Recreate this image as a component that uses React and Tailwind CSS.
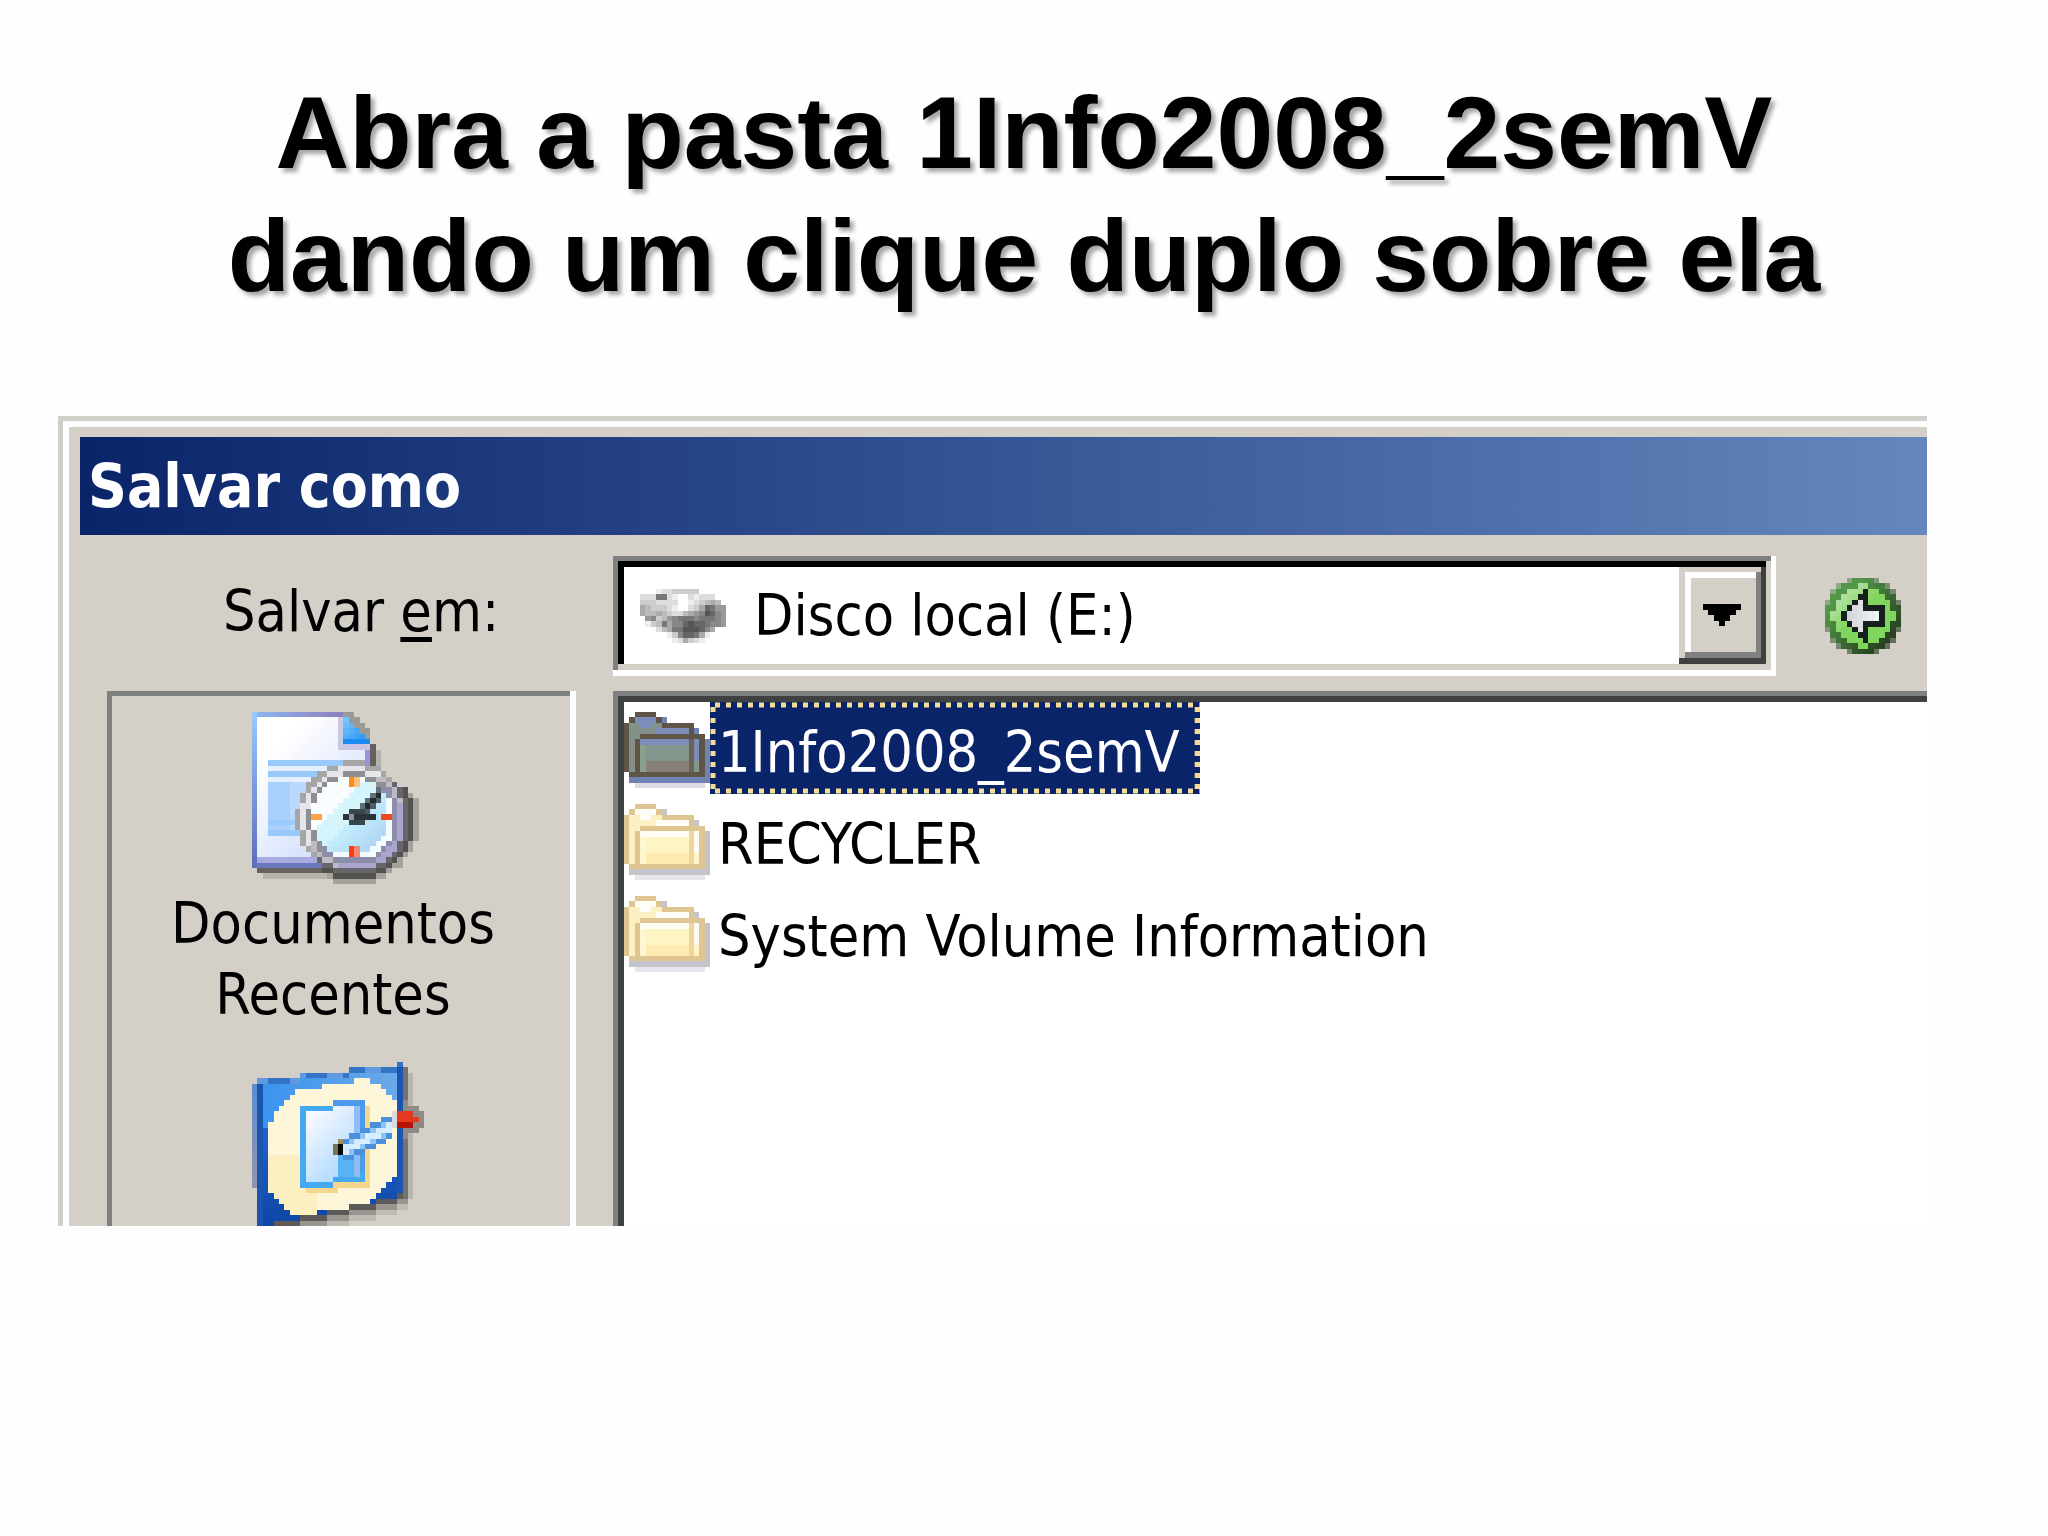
import React from "react";

const UI = "font-['DejaVu_Sans_Condensed','Noto_Sans',sans-serif]";

function PixelArt({ cols, rows, cell, className }) {
  const rects = [];
  for (let y = 0; y < rows; y++) {
    for (let x = 0; x < cols; x++) {
      const fill = cell(x, y);
      if (fill) rects.push(<rect key={y * cols + x} x={x} y={y} width="1.02" height="1.02" fill={fill} />);
    }
  }
  return (
    <svg viewBox={`0 0 ${cols} ${rows}`} preserveAspectRatio="none" shapeRendering="crispEdges" aria-hidden="true" className={className}>
      {rects}
    </svg>
  );
}

const mix = (a, b, t) => {
  const k = Math.max(0, Math.min(1, t));
  return `rgb(${a.map((v, i) => Math.round(v + (b[i] - v) * k)).join(",")})`;
};

const FOLDER = [
  "..eeee..........",
  ".ehhhhes........",
  "eyyhhyyeeeeee...",
  "eyyyyyhhhhhhes..",
  "eyyeeeeeeeeeeee.",
  "eyehhhhhhhhhthes",
  "eyelffffffffthes",
  "eyelffffffffthes",
  "eyelffffffffthes",
  "eyelggggggggtfes",
  "eyelggggggggtfes",
  ".eeeeeeeeeeeeees",
  ".sssssssssssssss",
  "..rrrrrrrrrrrrr.",
];
const FOLDER_NORMAL = { e: "#dfc591", h: "#fffef6", y: "#fdf0c2", l: "#fff6d2", f: "#fef4c4", g: "#fdebb2", t: "#f3d39c", s: "#c4c5ca", r: "#e6e7ec" };
const FOLDER_SELECTED = { e: "#5f5546", h: "#7c8dba", y: "#84908a", l: "#8ba08c", f: "#82968c", g: "#887f78", t: "#6c6256", s: "#7183b4", r: "#dadbe0" };

function Folder({ selected }) {
  const palette = selected ? FOLDER_SELECTED : FOLDER_NORMAL;
  return <PixelArt cols={16} rows={14} cell={(x, y) => palette[FOLDER[y][x]]} className="mt-1 h-[76px] w-[86px] shrink-0" />;
}

const DRIVE = [
  "...eddccccc.....",
  "ddd77deffdeddd..",
  "cccddddffedcbab.",
  "abcccdeffdca6799",
  "abbabcddba985689",
  ".98cb98777877789",
  ".ecb7a8865667889",
  "...dba7755568a..",
  ".....ec8667ae...",
  "......edacde....",
];

function Drive() {
  const cell = (x, y) => {
    const c = DRIVE[y][x];
    return c === "." ? null : `#${c}${c}${c}`;
  };
  return <PixelArt cols={16} rows={10} cell={cell} className="h-[54px] w-[86px] shrink-0" />;
}

const ARROW = [
  "..............",
  "..............",
  ".......k......",
  "......kk......",
  ".....kwk......",
  "....kwwkkkk...",
  "...kwwwwwwk...",
  "...kwwwwwwk...",
  "....kwwkkkk...",
  ".....kwk......",
  "......kk......",
  ".......k......",
  "..............",
  "..............",
];

function BackArrow() {
  const cell = (x, y) => {
    const c = ARROW[y][x];
    if (c === "k") return "#15201a";
    if (c === "w") return mix([205, 208, 212], [240, 242, 244], (x - 3) / 6);
    const d = Math.hypot(x - 6.5, y - 6.5);
    if (d > 7.3) return null;
    if (d > 6.7) return mix([150, 178, 142], [96, 100, 88], (x + y) / 26);
    if (d > 5.7) return mix([82, 150, 72], [38, 66, 30], (x + y - 6) / 16);
    return mix([190, 226, 180], [128, 214, 92], (x + y - 4) / 8);
  };
  return <PixelArt cols={14} rows={14} cell={cell} className="h-[76px] w-[76px]" />;
}

function recentCell(x, y) {
  const dx = x - 18.3;
  const dy = y - 19.3;
  const d = Math.hypot(dx, dy) * 1.04;
  if (d < 8) {
    if (x >= 18 && x <= 19 && y >= 12 && y <= 13) return x === 18 ? "#ff8a1c" : "#ffc07a";
    if (x >= 18 && x <= 19 && y >= 25 && y <= 26) return x === 18 ? "#ff3c0c" : "#f08a70";
    if (y === 19 && (x === 11 || x === 12)) return "#ffa04a";
    if (y === 19 && (x === 24 || x === 25)) return "#ee4a1c";
    if (y === 19 && x >= 17 && x <= 22) return x === 18 ? "#8b95a0" : "#2c3338";
    if ((y === 18 || y === 20) && x >= 18 && x <= 20) return "#3a464c";
    if (x + y === 38 && x >= 19 && x <= 23) return "#232b30";
    if (x + y === 37 && x >= 20 && x <= 23) return "#5f7078";
    if (x + y === 39 && x >= 20 && x <= 23) return "#4d5b64";
    if (d > 6.6 && dx + dy > 3) return "#f4fbff";
    return dx + dy < -5 ? "#fafdff" : dx + dy < 0 ? "#d6f4fb" : mix([196, 238, 252], [178, 216, 246], (dx + dy) / 8);
  }
  if (d < 8.9) return dx + dy < 0 ? "#8d8f92" : "#8c8da8";
  if (d < 10) return dx + dy < -3 ? "#e6e6ea" : dx + dy < 6 ? "#bdbcc2" : "#a9a5cc";
  if (d < 10.9) return dx + dy < 0 ? "#a6a6a6" : "#66666c";
  if (d < 11.9 && dx + dy > 4) return "#54524e";
  if (d < 12.8 && dx + dy > 6) return "#a5a29b";
  if (x <= 21 && y <= 28) {
    if (x - y > 16) {
      if (x - y === 17 || x - y === 18) return y < 7 ? "#9a9a96" : null;
      return null;
    }
    if (x === 0) return mix([150, 200, 255], [94, 108, 190], y / 28);
    if (y === 0) return mix([140, 180, 240], [140, 130, 190], x / 16);
    if (y === 28) return "#6b78bd";
    if (y === 27) return "#a9abdf";
    if (x >= 17 && y >= 1 && y <= 5) return y >= 5 ? "#1b8cf0" : mix([150, 215, 255], [50, 155, 245], (x - 15 + y) / 9);
    if (x === 16 && y <= 6) return "#c6cae4";
    if (x >= 16 && y === 6) return "#c9c4e6";
    if (x === 21) return "#9d93dc";
    if (x >= 3 && y >= 9 && y <= 22) {
      if (y === 9 || y === 11 || y === 22) return "#99c8fb";
      if (y === 10 || y === 12) return "#e4f0ff";
      if (y === 20) return "#9ccafb";
      return x > 6 ? "#b9dafc" : "#a9d0fb";
    }
    return mix([255, 255, 255], [214, 226, 252], (x + y - 10) / 26);
  }
  if (x === 22 && y >= 6 && y <= 10) return "#64625e";
  if (x === 23 && y >= 7 && y <= 10) return "#b5b2ab";
  if (y === 29 && x >= 1 && x <= 17) return "#66635f";
  if (y === 30 && x >= 2 && x <= 17) return "#b7b4ac";
  return null;
}

function desktopCell(x, y) {
  const top = 3 - x * 0.115;
  const bottom = 29.8 - x * 0.215;
  const tip = Math.hypot(x - 28.2, y - 10);
  if (tip < 1.9) return y > 10 ? "#b41408" : "#e23a1e";
  if (x === 26 && y >= 9 && y <= 11) return "#d8dade";
  const pen = 15.4 - (x - 17) * 0.5;
  if (x >= 17 && x <= 25 && Math.abs(y - pen) < 2.2) {
    return Math.abs(y - pen) > 1.2 ? "#4a90dc" : Math.abs(y - pen) < 0.6 ? "#d6ecff" : "#8fc4f6";
  }
  if (x >= 15 && x <= 17 && (y === 15 || y === 16)) return x === 16 ? "#0a0a08" : "#77735a";
  if (x === 16 && y === 14) return "#9c8f5a";
  if (tip < 3.1 && x > 27) return "#8f8a86";
  if (x <= 27 && x >= 1 && y >= top && y <= bottom) {
    const pt = 7.9 - (x - 9) * 0.16;
    const pb = 22.9 - (x - 9) * 0.16;
    if (x >= 9 && x <= 20 && y >= pt && y <= pb) {
      if (x === 9 || y < pt + 1 || y > pb - 1 || x === 20) return x > 14 && y < 20 ? "#4c98ea" : "#45a9f2";
      if (x === 19) return "#8fbdf4";
      if (x >= 16 && x <= 18 && y >= 17 && y <= 20) return "#58b2f4";
      return mix([246, 249, 255], [160, 210, 255], (x + y - 20) / 20);
    }
    const cx = Math.abs(x - 14.5);
    const cy = Math.abs(y - (15.2 - (x - 14) * 0.16));
    if (cx <= 11.7 && cy <= 11.4 && cx + cy <= 18.4) {
      if ((x === 21 && y > 7 && y < 22) || (y > pb && y < pb + 1.2 && x > 9 && x < 22)) return "#f4d68c";
      return x < 12 && y > 16 ? "#fdf0c0" : "#fdf6d8";
    }
    if (y < top + 1) return x % 7 < 3 ? "#5f9ae0" : "#3474c6";
    if (x === 1 || x === 27) return "#1c55ae";
    return y < 12 ? mix([56, 146, 240], [110, 170, 232], x / 28) : mix([28, 96, 200], [14, 72, 168], (y - 14) / 14);
  }
  if (x === 0 && y >= 4 && y <= 22) return mix([80, 140, 216], [150, 150, 170], y / 24);
  if (x === 28 && y >= 1 && y <= 24) return "#75736f";
  if (x === 29 && y >= 2 && y <= 24) return "#b9b6af";
  if (x > 2 && x < 29 && y > bottom && y <= bottom + 1) return "#5c5b5a";
  if (x > 3 && x < 29 && y > bottom && y <= bottom + 2) return "#99968f";
  if (x > 5 && x < 29 && y > bottom && y <= bottom + 3) return "#bfbcb4";
  return null;
}

const FILES = ["1Info2008_2semV", "RECYCLER", "System Volume Information"];

function FileRow({ name, selected }) {
  return (
    <li>
      <button type="button" aria-pressed={selected} className="flex h-[92px] items-center text-left">
        <Folder selected={selected} />
        {selected ? (
          <span className="relative flex h-full items-center bg-[#0a246a] pt-2 pr-5 pl-2 text-white">
            {name}
            <svg aria-hidden="true" className="absolute inset-0 h-full w-full" stroke="#f5db95" strokeDasharray="5 6">
              <line x1="5" y1="3" x2="100%" y2="3" strokeWidth="5" />
              <line x1="5" y1="89" x2="100%" y2="89" strokeWidth="5" />
              <line x1="3" y1="5" x2="3" y2="100%" strokeWidth="5" />
              <line x1="100%" y1="5" x2="100%" y2="100%" strokeWidth="10" />
            </svg>
          </span>
        ) : (
          <span className="px-2 pt-2">{name}</span>
        )}
      </button>
    </li>
  );
}

function DropButton() {
  return (
    <button type="button" aria-label="Abrir lista" className="border-r-[5px] border-b-[6px] border-[#404040]">
      <span className="block h-full border-t-[5px] border-l-[6px] border-[#d4d0c8]">
        <span className="block h-full border-r-[5px] border-b-[6px] border-[#808080]">
          <span className="flex h-full w-[71px] items-center justify-center border-t-[6px] border-l-[6px] border-white bg-[#d4d0c8] pr-1">
            <PixelArt cols={7} rows={4} cell={(x, y) => (x >= y && x <= 6 - y ? "#000" : null)} className="h-[22px] w-[38px]" />
          </span>
        </span>
      </span>
    </button>
  );
}

function SaveInField() {
  return (
    <div className="flex-1 border-r-[5px] border-b-[6px] border-white">
      <div className="border-t-[5px] border-l-[5px] border-[#808080]">
        <div className="border-r-[5px] border-b-[6px] border-[#d4d0c8]">
          <div className="flex h-[103px] items-stretch border-t-[6px] border-l-[6px] border-black bg-white">
            <span className="flex items-center pl-4">
              <Drive />
            </span>
            <select id="save-in" className="min-w-0 flex-1 appearance-none bg-transparent pl-7 outline-none">
              <option>Disco local (E:)</option>
            </select>
            <DropButton />
          </div>
        </div>
      </div>
    </div>
  );
}

export default function App() {
  return (
    <main className="min-h-screen bg-[#fefefe] pt-[72px] text-black">
      <h1 className="text-center font-['Liberation_Sans',Arial,sans-serif] text-[102px] leading-[123px] font-bold [text-shadow:4px_4px_4px_rgba(0,0,0,0.35)]">
        Abra a pasta 1Info2008_2semV
        <br />
        dando um clique duplo sobre ela
      </h1>

      <section aria-labelledby="dialog-title" className={`mt-[98px] mr-[121px] ml-[58px] border-t-[5px] border-l-[5px] border-[#d0d0cb] text-[57px] leading-[71px] ${UI}`}>
        <div className="border-t-[6px] border-l-[6px] border-white bg-[#d4d0c8] pt-[10px] pl-[11px]">
          <h2 id="dialog-title" className="flex h-[98px] items-center bg-linear-to-r from-[#0a246a] to-[#6686be] px-2 text-[60px] font-bold text-white">
            Salvar como
          </h2>

          <div className="flex pt-[21px]">
            <label htmlFor="save-in" className="w-[533px] shrink-0 pt-[20px] pl-[143px]">
              Salvar <span className="underline decoration-[5px] underline-offset-[6px]">e</span>m:
            </label>
            <SaveInField />
            <button type="button" aria-label="Voltar" className="mr-[26px] ml-[49px] self-center">
              <BackArrow />
            </button>
          </div>

          <div className="flex pt-[15px]">
            <nav aria-label="Locais" className="mr-[37px] ml-[27px] w-[469px] shrink-0 border-r-[6px] border-white">
              <div className="h-full border-t-[5px] border-l-[5px] border-[#808080] pt-4">
                <button type="button" className="block w-full">
                  <PixelArt cols={32} rows={32} cell={recentCell} className="ml-[140px] h-[172px] w-[172px]" />
                  <span className="mt-1 block pr-10 pl-6">Documentos Recentes</span>
                </button>
                <button type="button" aria-label="Desktop" className="mt-8 block w-full">
                  <PixelArt cols={32} rows={30} cell={desktopCell} className="ml-[140px] h-[164px] w-[172px]" />
                </button>
              </div>
            </nav>
            <div className="flex-1 border-t-[5px] border-l-[5px] border-[#808080]">
              <ul className="h-full border-t-[6px] border-l-[6px] border-[#404040] bg-white">
                {FILES.map((name, i) => (
                  <FileRow key={name} name={name} selected={i === 0} />
                ))}
              </ul>
            </div>
          </div>
        </div>
      </section>
    </main>
  );
}
